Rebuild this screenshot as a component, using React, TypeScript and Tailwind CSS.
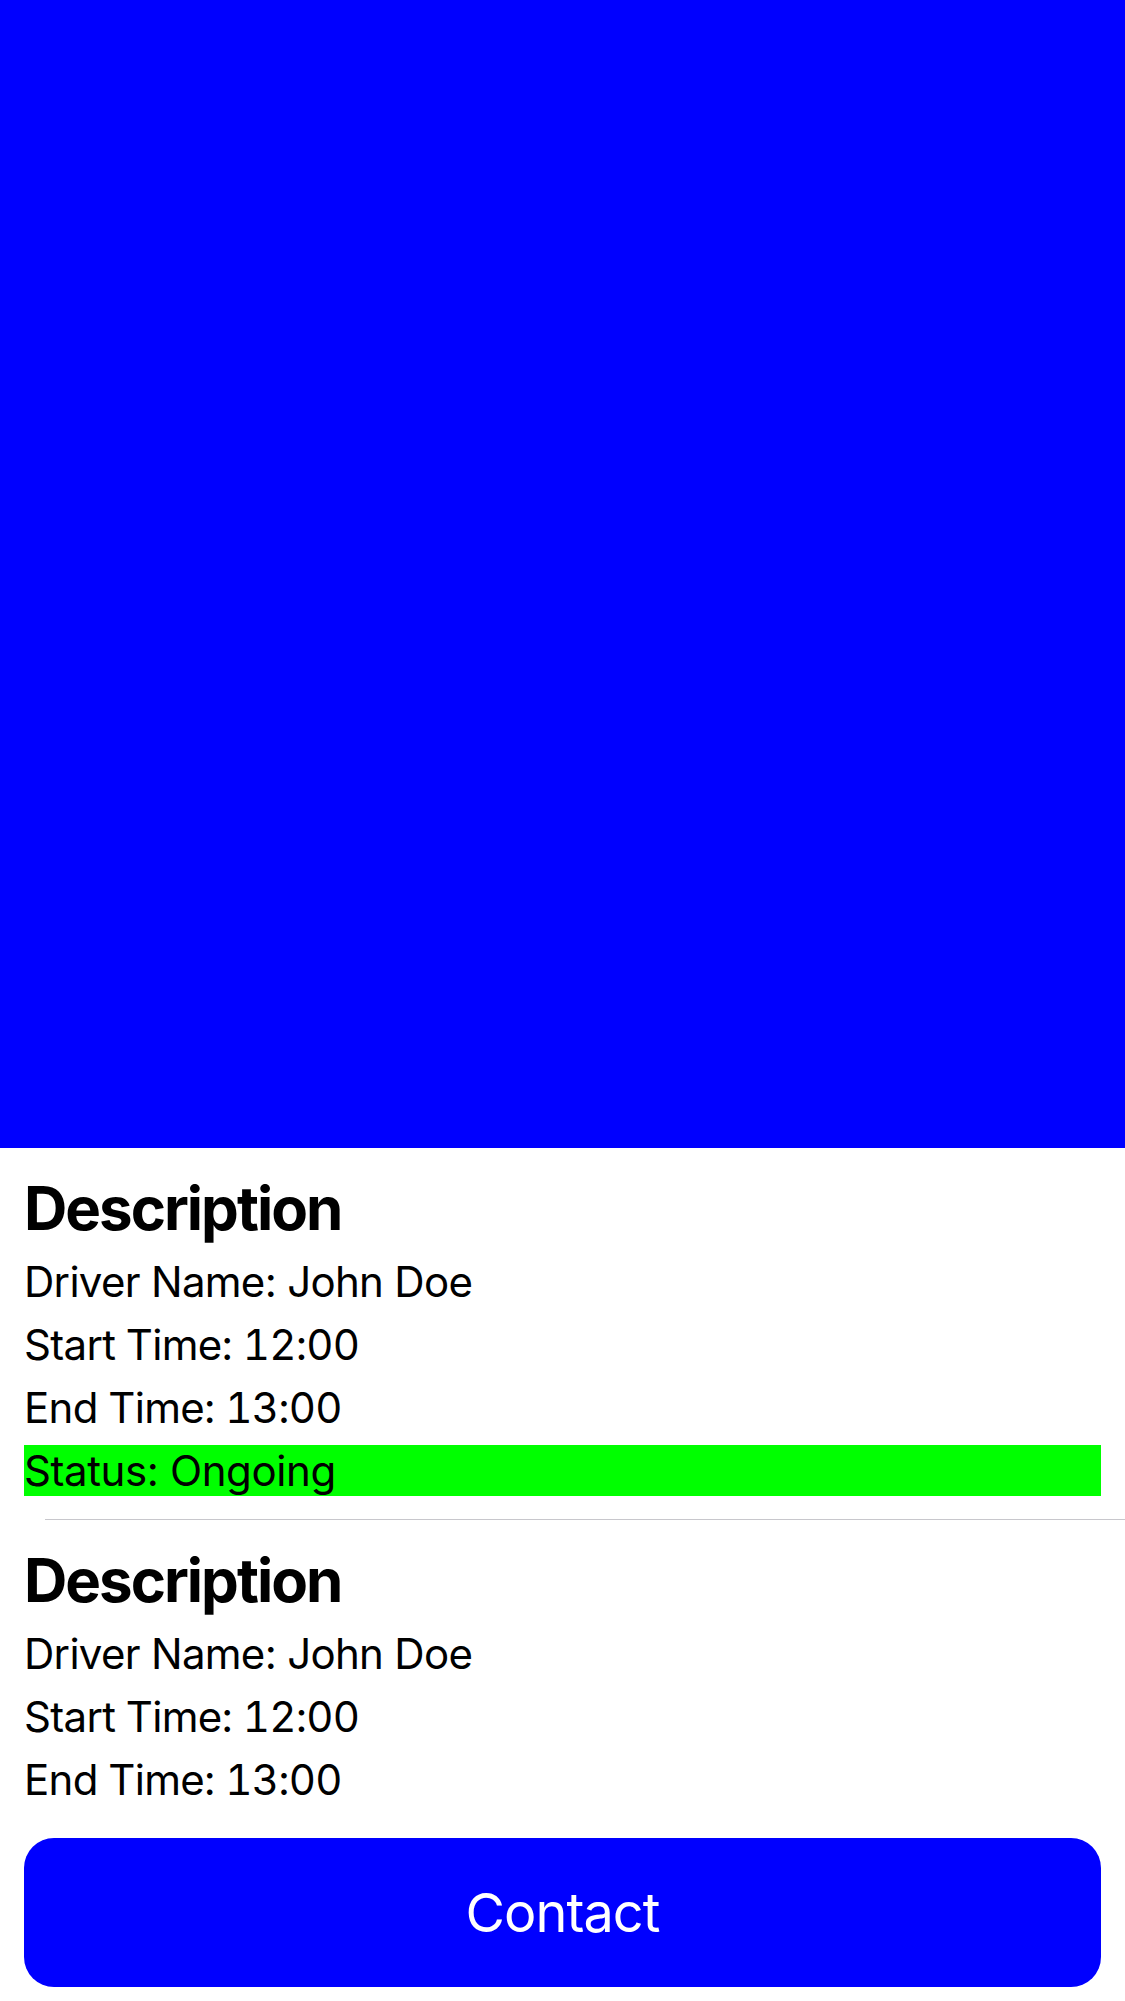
export default function App() {
  return (
    <div className="w-[1125px] h-[2001px] bg-white flex flex-col font-['Inter',sans-serif] text-black overflow-hidden">
      {/* map placeholder */}
      <div className="h-[1148px] bg-[#0000ff] shrink-0" />

      <TripCell showStatus />
      <div className="ml-[45px] h-px bg-[#c8c7cc] mt-[23px]" />
      <TripCell />

      <div className="px-[24px] mt-[33px]">
        <button className="w-full h-[149px] rounded-[30px] bg-[#0000ff] text-white text-[54px] leading-none tracking-[-0.9px]">
          Contact
        </button>
      </div>
    </div>
  );
}

function TripCell({ showStatus = false }: { showStatus?: boolean }) {
  return (
    <div className="px-[24px] pt-[24px] flex flex-col gap-3">
      <h2 className="text-[60px] leading-[72px] font-bold tracking-[-2px]">Description</h2>
      <p className="text-[42px] leading-[51px] tracking-[-0.7px]">Driver Name: John Doe</p>
      <p className="text-[42px] leading-[51px] tracking-[-0.7px] tabular-nums">Start Time: 12:00</p>
      <p className="text-[42px] leading-[51px] tracking-[-0.7px] tabular-nums">End Time: 13:00</p>
      {showStatus && (
        <p className="text-[42px] leading-[51px] tracking-[-0.4px] bg-[#00ff00]">Status: Ongoing</p>
      )}
    </div>
  );
}
